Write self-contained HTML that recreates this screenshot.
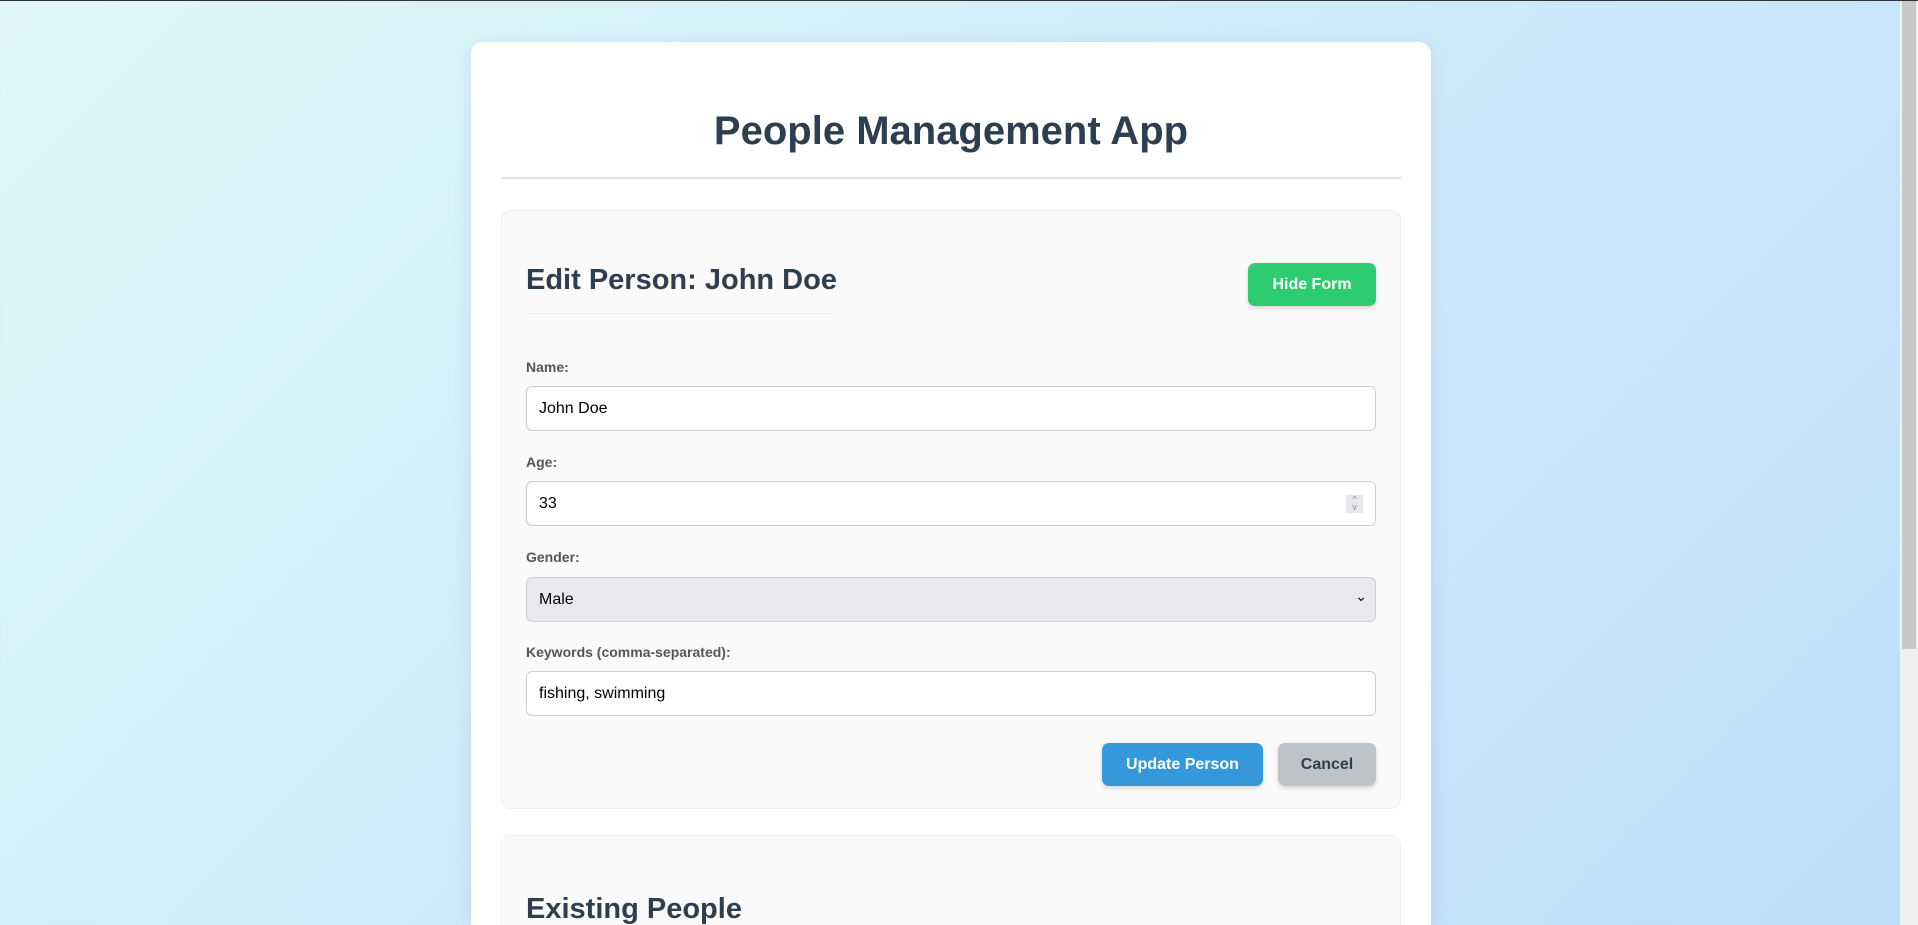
<!DOCTYPE html>
<html><head><meta charset="utf-8"><style>
*{box-sizing:border-box;margin:0;padding:0}
html,body{width:1918px;height:925px;overflow:hidden}
body{background:linear-gradient(135deg,#e0f7fa 0%,#bbdefb 100%);font-family:"Liberation Sans",Arial,sans-serif;position:relative;border-top:1px solid #333}
.card{position:absolute;left:471px;top:41px;width:960px;height:883px;overflow:hidden;background:#fff;border-radius:12px 12px 0 0;box-shadow:0 4px 20px rgba(0,0,0,.08)}
h1{position:absolute;left:0;width:100%;top:67px;text-align:center;font-size:40px;font-weight:bold;color:#2c3e50}
.hr{position:absolute;left:30px;right:30px;top:135px;height:2px;background:#e0e0e0}
.panel{position:absolute;left:30px;width:900px;background:#fafafa;border:1px solid #f0f0f0;border-radius:10px}
h2{position:absolute;left:24px;font-size:29px;font-weight:bold;color:#2c3e50}
.ul{position:absolute;left:24px;top:102px;width:308px;height:1px;background:#eee}
.btn{position:absolute;border-radius:7px;color:#fff;font-weight:bold;font-size:16px;display:flex;align-items:center;justify-content:center;box-shadow:0 2px 5px rgba(0,0,0,.15)}
label{position:absolute;left:24px;font-size:14px;font-weight:bold;color:#555}
.in{position:absolute;left:24px;width:850px;height:45px;background:#fff;border:1px solid #ccd;border-radius:6px;font-size:16px;color:#000;padding:0 12px;display:flex;align-items:center}
.sb{position:absolute;right:0;top:0;width:18px;height:925px;background:#f0f0f0}
.th{position:absolute;right:2px;top:0;width:14px;height:648px;background:#c8c8c8}
</style></head><body>
<div class="card">
<h1>People Management App</h1>
<div class="hr"></div>
<div class="panel" style="top:168px;height:599px">
 <h2 style="top:53px">Edit Person: John Doe</h2>
 <div class="ul"></div>
 <div class="btn" style="left:746px;top:52px;width:128px;height:43px;background:#2ecc71">Hide Form</div>
 <label style="top:148px">Name:</label>
 <div class="in" style="top:175px">John Doe</div>
 <label style="top:243px">Age:</label>
 <div class="in" style="top:270px">33<span style="position:absolute;right:12px;top:13px;width:17px;height:18px;background:#e8e8ec;font-size:9px;color:#888;line-height:8px;text-align:center">^<br>v</span></div>
 <label style="top:338px">Gender:</label>
 <div class="in" style="top:366px;background:#e9e9ed">Male<span style="position:absolute;right:8px;top:10px;font-size:14px">&#8964;</span></div>
 <label style="top:433px">Keywords (comma-separated):</label>
 <div class="in" style="top:460px">fishing, swimming</div>
 <div class="btn" style="left:600px;top:532px;width:161px;height:43px;background:#3498db">Update Person</div>
 <div class="btn" style="left:776px;top:532px;width:98px;height:43px;background:#bdc3c7;color:#2c3e50">Cancel</div>
</div>
<div class="panel" style="top:793px;height:120px">
 <h2 style="top:57px">Existing People</h2>
</div>
</div>
<div class="sb"><div class="th"></div></div>
</body></html>
